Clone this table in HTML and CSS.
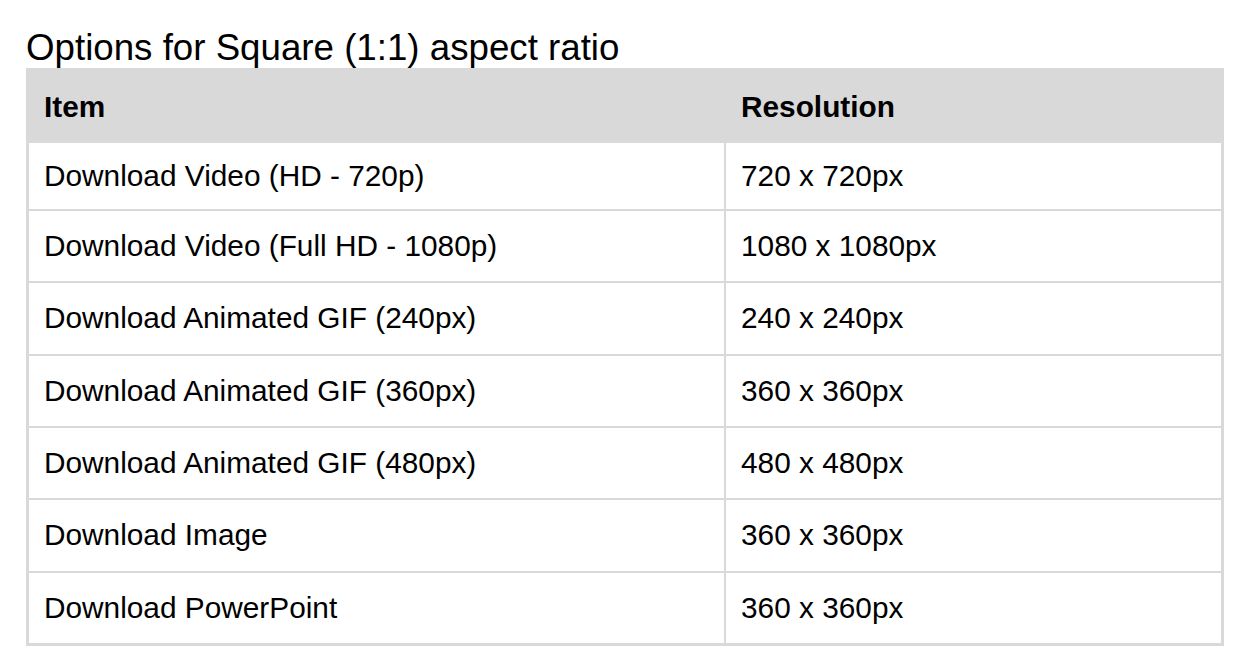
FILE: index.html
```html
<!DOCTYPE html>
<html lang="en">
<head>
<meta charset="utf-8">
<title>Options for Square (1:1) aspect ratio</title>
<link rel="stylesheet" href="styles.css">
</head>
<body>
<div class="page">
  <h2 class="title">Options for Square (1:1) aspect ratio</h2>
  <table class="options">
    <thead>
      <tr>
        <th class="col-item">Item</th>
        <th class="col-res">Resolution</th>
      </tr>
    </thead>
    <tbody>
      <tr class="first"><td class="col-item">Download Video (HD - 720p)</td><td class="col-res">720 x 720px</td></tr>
      <tr><td class="col-item">Download Video (Full HD - 1080p)</td><td class="col-res">1080 x 1080px</td></tr>
      <tr><td class="col-item">Download Animated GIF (240px)</td><td class="col-res">240 x 240px</td></tr>
      <tr><td class="col-item">Download Animated GIF (360px)</td><td class="col-res">360 x 360px</td></tr>
      <tr><td class="col-item">Download Animated GIF (480px)</td><td class="col-res">480 x 480px</td></tr>
      <tr><td class="col-item">Download Image</td><td class="col-res">360 x 360px</td></tr>
      <tr><td class="col-item">Download PowerPoint</td><td class="col-res">360 x 360px</td></tr>
    </tbody>
  </table>
</div>
</body>
</html>
```

FILE: styles.css
```css
html, body {
  margin: 0;
  padding: 0;
  background: #ffffff;
}

body {
  font-family: "Liberation Sans", Arial, sans-serif;
  color: #000000;
}

.page {
  padding: 28px 0 0 26px;
}

.title {
  margin: 0;
  font-size: 36.7px;
  font-weight: normal;
  line-height: 40px;
}

.options {
  width: 1198px;
  border-collapse: separate;
  border-spacing: 0;
  border: 3px solid #d9d9d9;
  table-layout: fixed;
  font-size: 29.8px;
}

.options th,
.options td {
  padding: 0 15px;
  text-align: left;
  vertical-align: middle;
}

.options th {
  background: #d9d9d9;
  font-weight: bold;
  height: 72px;
}

.options .col-item {
  width: 665px;
}

.options td {
  height: 70.33px;
  border-top: 2px solid #d9d9d9;
}

.options tr.first td {
  height: 66px;
  border-top: 0;
}

.options td.col-res {
  border-left: 2px solid #d9d9d9;
}

.options th.col-res {
  border-left: 2px solid #d9d9d9;
}
```
